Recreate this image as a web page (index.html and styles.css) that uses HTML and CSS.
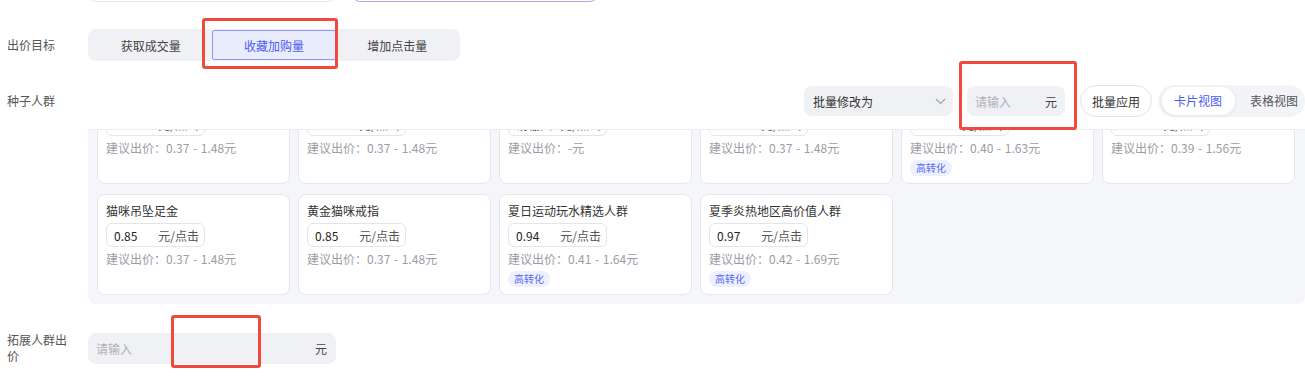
FILE: index.html
```html
<!DOCTYPE html>
<html lang="zh-CN">
<head>
<meta charset="utf-8">
<title>出价设置</title>
<link rel="stylesheet" href="styles.css">
</head>
<body>
<div class="page">
  <div class="form-row prev-row">
    <div class="label"></div>
    <div class="option-boxes">
      <div class="option-box"></div>
      <div class="option-box is-selected"></div>
    </div>
  </div>

  <div class="form-row goal-row">
    <div class="label">出价目标</div>
    <div class="segmented">
      <div class="segment">获取成交量</div>
      <div class="segment is-active">收藏加购量</div>
      <div class="segment">增加点击量</div>
    </div>
  </div>

  <div class="form-row seed-row">
    <div class="label label-tall">种子人群</div>
    <div class="seed-body">
      <div class="toolbar">
        <div class="select">
          <span>批量修改为</span>
          <svg class="chevron" width="11" height="7" viewBox="0 0 11 7"><polyline points="1,1 5.5,5.5 10,1" fill="none" stroke="#a3a3ab" stroke-width="1.2"/></svg>
        </div>
        <div class="mini-input"><span class="placeholder">请输入</span><span class="unit">元</span></div>
        <div class="pill-btn">批量应用</div>
        <div class="view-toggle">
          <div class="view-option is-active">卡片视图</div>
          <div class="view-option">表格视图</div>
        </div>
      </div>
      <div class="card-scroll">
        <div class="card-grid">
          <div class="crowd-card">
            <div class="crowd-name">猫咪项链足金</div>
            <div class="bid-input"><span class="bid-value">0.85</span><span class="bid-unit">元/点击</span></div>
            <div class="bid-hint">建议出价：0.37 - 1.48元</div>
          </div>
          <div class="crowd-card">
            <div class="crowd-name">黄金猫咪手链</div>
            <div class="bid-input"><span class="bid-value">0.85</span><span class="bid-unit">元/点击</span></div>
            <div class="bid-hint">建议出价：0.37 - 1.48元</div>
          </div>
          <div class="crowd-card">
            <div class="crowd-name">宠物饰品兴趣人群</div>
            <div class="bid-input"><span class="bid-value placeholder">请输入</span><span class="bid-unit">元/点击</span></div>
            <div class="bid-hint">建议出价：-元</div>
          </div>
          <div class="crowd-card">
            <div class="crowd-name">猫咪耳钉足金</div>
            <div class="bid-input"><span class="bid-value">0.85</span><span class="bid-unit">元/点击</span></div>
            <div class="bid-hint">建议出价：0.37 - 1.48元</div>
          </div>
          <div class="crowd-card">
            <div class="crowd-name">黄金饰品高消费人群</div>
            <div class="bid-input"><span class="bid-value">0.92</span><span class="bid-unit">元/点击</span></div>
            <div class="bid-hint">建议出价：0.40 - 1.63元</div>
            <span class="tag">高转化</span>
          </div>
          <div class="crowd-card">
            <div class="crowd-name">猫咪转运珠</div>
            <div class="bid-input"><span class="bid-value">0.89</span><span class="bid-unit">元/点击</span></div>
            <div class="bid-hint">建议出价：0.39 - 1.56元</div>
          </div>

          <div class="crowd-card">
            <div class="crowd-name">猫咪吊坠足金</div>
            <div class="bid-input"><span class="bid-value">0.85</span><span class="bid-unit">元/点击</span></div>
            <div class="bid-hint">建议出价：0.37 - 1.48元</div>
          </div>
          <div class="crowd-card">
            <div class="crowd-name">黄金猫咪戒指</div>
            <div class="bid-input"><span class="bid-value">0.85</span><span class="bid-unit">元/点击</span></div>
            <div class="bid-hint">建议出价：0.37 - 1.48元</div>
          </div>
          <div class="crowd-card">
            <div class="crowd-name">夏日运动玩水精选人群</div>
            <div class="bid-input"><span class="bid-value">0.94</span><span class="bid-unit">元/点击</span></div>
            <div class="bid-hint">建议出价：0.41 - 1.64元</div>
            <span class="tag">高转化</span>
          </div>
          <div class="crowd-card">
            <div class="crowd-name">夏季炎热地区高价值人群</div>
            <div class="bid-input"><span class="bid-value">0.97</span><span class="bid-unit">元/点击</span></div>
            <div class="bid-hint">建议出价：0.42 - 1.69元</div>
            <span class="tag">高转化</span>
          </div>
        </div>
      </div>
    </div>
  </div>

  <div class="form-row expand-row">
    <div class="label label-wrap">拓展人群出价</div>
    <div class="price-input"><span class="placeholder">请输入</span><span class="unit">元</span></div>
  </div>
</div>

<!-- annotation boxes -->
<div class="mark mark-goal"></div>
<div class="mark mark-batch"></div>
<div class="mark mark-expand"></div>
</body>
</html>
```

FILE: styles.css
```css
html, body { margin: 0; padding: 0; background: #fff; }
body {
  position: relative;
  overflow: hidden;
  height: 387px;
  font-family: "Noto Sans CJK SC", "Noto Sans", sans-serif;
  font-size: 12px;
  color: #333;
}
.page { padding-left: 7px; }

.form-row { display: grid; grid-template-columns: 81px 1fr; align-items: center; }
.label { color: #555; line-height: 18px; }
.label-tall { line-height: 32px; align-self: start; }
.label-wrap { width: 64px; line-height: 16px; }

/* previous option row, scrolled mostly out of view */
.prev-row { margin-top: -28px; }
.option-boxes { display: flex; gap: 16px; }
.option-box { width: 248px; height: 30px; box-sizing: border-box; border: 1px solid #e4e4ee; border-radius: 8px; }
.option-box.is-selected { width: 246px; border-color: #a6adf7; }

/* bid goal */
.goal-row { margin-top: 27px; }
.segmented {
  display: flex; width: 372px; height: 32px; box-sizing: border-box;
  padding: 1px; background: #f0f1f5; border-radius: 8px;
}
.segment { flex: 1; display: flex; align-items: center; justify-content: center; color: #444; border: 1px solid transparent; border-radius: 2px; }
.segment.is-active { background: #e9ecfd; border-color: #8f97f7; color: #4d5bef; }

/* seed crowd */
.seed-row { margin-top: 24px; align-items: start; }
.toolbar { display: flex; justify-content: flex-end; align-items: center; height: 32px; }
.select {
  width: 149px; height: 30px; box-sizing: border-box; padding: 0 7px 0 9px;
  display: flex; align-items: center; justify-content: space-between;
  background: #f0f1f5; border-radius: 8px; color: #333;
}
.mini-input {
  width: 98px; height: 30px; box-sizing: border-box; margin-left: 14px; padding: 0 8px;
  display: flex; align-items: center; justify-content: space-between;
  background: #f0f1f5; border-radius: 8px;
}
.placeholder { color: #b0b0b8; }
.unit { color: #444; }
.pill-btn {
  margin-left: 15px; width: 72px; height: 32px; box-sizing: border-box;
  display: flex; align-items: center; justify-content: center;
  border: 1px solid #e2e2ec; border-radius: 16px; background: #fff; color: #333;
}
.view-toggle {
  margin-left: 6px; height: 32px; box-sizing: border-box; padding: 2px 4px;
  display: flex; align-items: center; background: #f3f4f7; border-radius: 16px;
}
.view-option { height: 28px; line-height: 28px; padding: 0 3px 0 15px; color: #555; }
.view-option.is-active {
  padding: 0 13px 0 12px; background: #fff; border-radius: 14px; color: #4d5bef;
  box-shadow: 0 1px 4px rgba(30, 40, 90, 0.08);
}

.card-scroll {
  margin-top: 12px; overflow: hidden;
  background: #f5f6f9; border-top: 1px solid #ebebf0; border-radius: 0 0 8px 8px;
}
.card-grid {
  display: grid; grid-template-columns: repeat(6, 193px); gap: 10px 8px;
  padding: 9px; margin-top: -56px;
}
.crowd-card {
  height: 101px; box-sizing: border-box; padding: 7px 8px;
  background: #fff; border: 1px solid #e6e7ee; border-radius: 8px;
}
.crowd-name { line-height: 18px; color: #333; }
.bid-input {
  margin-top: 3px; width: 99px; height: 24px; box-sizing: border-box; padding: 0 5px 0 7px;
  display: flex; align-items: center; justify-content: space-between;
  border: 1px solid #e3e4ec; border-radius: 6px;
}
.bid-value { color: #222; }
.bid-unit { color: #555; }
.bid-hint { margin-top: 3px; line-height: 18px; color: #9c9ca4; word-spacing: 1px; }
.tag {
  display: inline-block; margin-top: 3px; height: 16px; line-height: 16px; padding: 0 6px;
  font-size: 10px; color: #5668f0; background: #edf0ff; border-radius: 8px;
}

/* expand crowd */
.expand-row { margin-top: 28px; }
.price-input {
  width: 248px; height: 31px; box-sizing: border-box; padding: 0 9px 0 8px;
  display: flex; align-items: center; justify-content: space-between;
  background: #f0f1f5; border-radius: 8px;
}

/* red annotation frames drawn over the screenshot */
.mark { position: absolute; box-sizing: border-box; border: 3px solid #ef4a3d; border-radius: 3px; }
.mark-goal { left: 202px; top: 18px; width: 136px; height: 51px; }
.mark-batch { left: 959px; top: 61px; width: 118px; height: 69px; }
.mark-expand { left: 171px; top: 315px; width: 90px; height: 53px; }
```
